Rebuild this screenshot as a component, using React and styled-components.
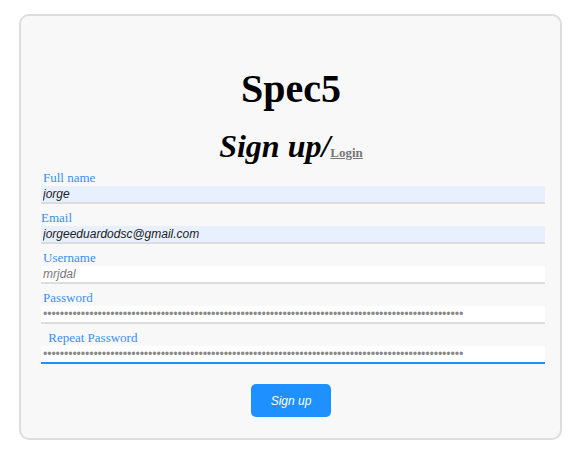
import React from 'react';
import styled, { createGlobalStyle } from 'styled-components';

const GlobalStyle = createGlobalStyle`
  body {
    margin: 0;
    background: #ffffff;
    font-family: "Liberation Serif", "Times New Roman", serif;
  }
`;

const Card = styled.div`
  box-sizing: border-box;
  width: 543px;
  height: 426px;
  margin: 14px 0 0 19px;
  background: #f8f8f8;
  border: 2px solid #dddddd;
  border-radius: 10px;
  padding: 0 15px 0 20px;
  display: flex;
  flex-direction: column;
`;

const Title = styled.h1`
  margin: 50px 0 0;
  padding-right: 4px;
  text-align: center;
  font-size: 40px;
  line-height: 46px;
  font-weight: bold;
  color: #000;
`;

const Subtitle = styled.h2`
  margin: 16px 0 0;
  padding-right: 4px;
  text-align: center;
  font-size: 32px;
  line-height: 36px;
  font-style: italic;
  font-weight: bold;
  color: #000;
`;

const LoginLink = styled.a`
  font-size: 13px;
  font-style: normal;
  font-weight: bold;
  color: #777777;
  text-decoration: underline;
`;

const Form = styled.form`
  display: flex;
  flex-direction: column;
  margin-top: -1px;
`;

const Field = styled.div`
  display: flex;
  flex-direction: column;
  margin-bottom: 6px;
`;

const Label = styled.label`
  font-size: 13px;
  line-height: 16px;
  color: #3b8ef5;
  padding-left: ${p => p.$indent}px;
`;

const Input = styled.input`
  box-sizing: border-box;
  height: 18px;
  margin: 0;
  padding: 0 2px;
  border: none;
  border-bottom: 2px solid ${p => (p.$focused ? '#1e90ff' : '#dddddd')};
  background: ${p => (p.$filled ? '#e8f0fe' : '#ffffff')};
  font-family: "Liberation Sans", Arial, sans-serif;
  font-size: 12px;
  font-style: italic;
  color: ${p => (p.type === 'password' ? '#888888' : '#222222')};
  outline: none;

  &::placeholder {
    color: #777777;
  }
`;

const Actions = styled.div`
  display: flex;
  justify-content: center;
  margin: 14px 4px 0 0;
`;

const Button = styled.button`
  width: 80px;
  height: 33px;
  border: none;
  border-radius: 5px;
  background: #1e90ff;
  color: #ffffff;
  font-family: "Liberation Sans", Arial, sans-serif;
  font-size: 12px;
  font-style: italic;
  cursor: pointer;
`;

const dots = 'x'.repeat(100);

const fields = [
  { label: 'Full name', indent: 2, value: 'jorge', filled: true },
  { label: 'Email', indent: 0, value: 'jorgeeduardodsc@gmail.com', filled: true },
  { label: 'Username', indent: 2, placeholder: 'mrjdal' },
  { label: 'Password', indent: 2, value: dots, type: 'password' },
  { label: '\u00a0Repeat Password', indent: 4, value: dots, type: 'password', focused: true },
];

export default function App() {
  return (
    <>
      <GlobalStyle />
      <Card>
        <Title>Spec5</Title>
        <Subtitle>
          Sign up/<LoginLink href="#">Login</LoginLink>
        </Subtitle>
        <Form onSubmit={e => e.preventDefault()}>
          {fields.map(f => (
            <Field key={f.label}>
              <Label $indent={f.indent}>{f.label}</Label>
              <Input
                type={f.type || 'text'}
                defaultValue={f.value}
                placeholder={f.placeholder}
                $filled={f.filled}
                $focused={f.focused}
              />
            </Field>
          ))}
          <Actions>
            <Button type="submit">Sign up</Button>
          </Actions>
        </Form>
      </Card>
    </>
  );
}
